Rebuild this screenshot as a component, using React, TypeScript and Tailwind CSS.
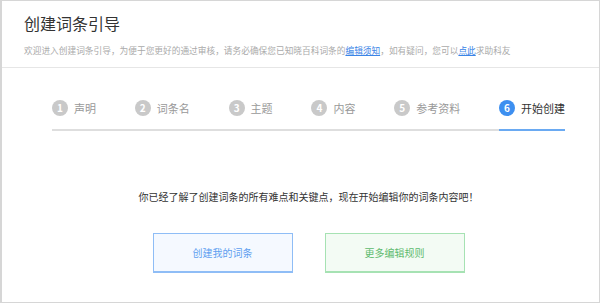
const steps = ["声明", "词条名", "主题", "内容", "参考资料", "开始创建"];

export default function App() {
  return (
    <div
      className="w-[600px] h-[303px] bg-white border-t border-r border-b border-l-2 border-[#d6d6d6] overflow-hidden"
      style={{ fontFamily: '"Noto Sans CJK SC", "Noto Sans", sans-serif' }}
    >
      <div className="h-[67px] border-b border-[#e6e6e6] pl-[22px] pt-3">
        <h1 className="text-[16px] leading-[20px] font-normal text-[#333]">创建词条引导</h1>
        <p className="mt-[12px] text-[8.7px] leading-[12px] text-[#aaa]">
          欢迎进入创建词条引导，为便于您更好的通过审核，请务必确保您已知晓百科词条的
          <a className="text-[#3a84e6] underline">编辑须知</a>
          ，如有疑问，您可以
          <a className="text-[#3a84e6] underline">点此</a>
          求助科友
        </p>
      </div>

      <div className="ml-[50px] w-[513px]">
        <div className="mt-[32px] flex justify-between border-b-2 border-[#dedede]">
          {steps.map((s, i) => {
            const active = i === steps.length - 1;
            return (
              <div
                key={s}
                className={
                  "flex items-center gap-[6px] pb-[13px] -mb-[2px] border-b-2 " +
                  (active ? "border-[#6aaaf2]" : "border-transparent")
                }
              >
                <span
                  className={
                    "w-[16px] h-[16px] rounded-full flex items-center justify-center text-white text-[10px] font-bold leading-none " +
                    (active ? "bg-[#3d8ff0]" : "bg-[#c9c9c9]")
                  }
                >
                  {i + 1}
                </span>
                <span className={"text-[11px] leading-[16px] " + (active ? "text-[#333]" : "text-[#999]")}>
                  {s}
                </span>
              </div>
            );
          })}
        </div>

        <p className="mt-[59px] text-center text-[10px] leading-[14px] text-[#333]">
          你已经了解了创建词条的所有难点和关键点，现在开始编辑你的词条内容吧！
        </p>

        <div className="mt-[29px] flex justify-center gap-[32px]">
          <button className="w-[140px] h-[40px] border border-b-2 border-[#8fbdf6] bg-[#f5f9ff] text-[10px] text-[#5e9ff0]">
            创建我的词条
          </button>
          <button className="w-[140px] h-[40px] border border-b-2 border-[#a6e2b3] bg-[#f3fbf4] text-[10px] text-[#5dba6d]">
            更多编辑规则
          </button>
        </div>
      </div>
    </div>
  );
}
